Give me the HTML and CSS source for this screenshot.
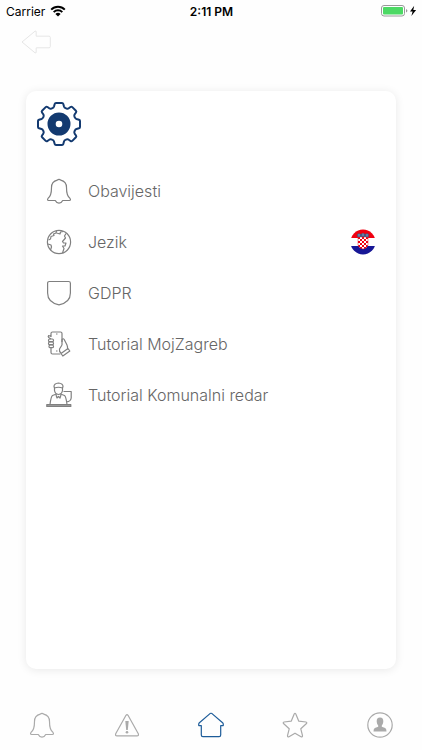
FILE: index.html
```html
<!DOCTYPE html>
<html lang="hr">
<head>
    <meta charset="UTF-8">
    <meta name="viewport" content="width=device-width, initial-scale=1.0">
    <title>Postavke - MojZagreb</title>
    <link rel="stylesheet" href="styles.css">
</head>
<body>
    <div class="status-bar">
        <div class="carrier">
            Carrier
            <svg width="16" height="12" viewBox="0 0 16 12">
                <path d="M1.2 4.6a9.6 9.6 0 0 1 13.6 0M3.7 7.1a6.1 6.1 0 0 1 8.6 0" fill="none" stroke="#000" stroke-width="2"/>
                <path d="M8 11.6L5.4 9a3.7 3.7 0 0 1 5.2 0z"/>
            </svg>
        </div>
        <div class="time">2:11 PM</div>
        <div class="battery">
            <svg width="37" height="12" viewBox="0 0 37 12">
                <rect x="1.5" y=".5" width="23" height="10.5" rx="2.5" fill="#fff" stroke="#999"/>
                <rect x="3" y="2" width="20" height="7.5" rx="1" fill="#4cd964"/>
                <path d="M26 4v3.5q1.4-.4 1.4-1.75T26 4z" fill="#999"/>
                <path d="M34.2.8L30 6.600h2.600l-1.200 4.400 4.700-5.900h-2.800z"/>
            </svg>
        </div>
    </div>

    <header class="header">
        <a href="#" class="back" aria-label="Natrag">
            <svg width="30" height="24" viewBox="0 0 30 24">
                <path d="M1 12L14 1.2q1.2-.7 1.2.8v4.2H28q1.3 0 1.3 1.3v9q0 1.3-1.3 1.3H15.2V22q0 1.5-1.2.8z"/>
            </svg>
        </a>
    </header>

    <main class="card">
        <svg class="gear" width="46" height="46" viewBox="-23 -23 46 46">
            <path d="M-3-21H3Q4-21 4.300-20L5-17.500Q5.400-16.300 6.500-15.900L7.700-15.400Q8.800-15 9.800-15.800L11.500-17Q12.500-17.700 13.300-16.900L16.900-13.300Q17.700-12.500 17-11.500L15.800-9.800Q15-8.800 15.400-7.700L15.900-6.500Q16.300-5.400 17.500-5L20-4.300Q21-4 21-3V3Q21 4 20 4.300L17.500 5Q16.300 5.400 15.900 6.500L15.400 7.700Q15 8.800 15.800 9.800L17 11.500Q17.700 12.500 16.900 13.300L13.300 16.900Q12.500 17.700 11.500 17L9.800 15.800Q8.800 15 7.700 15.400L6.500 15.900Q5.400 16.300 5 17.500L4.300 20Q4 21 3 21H-3Q-4 21-4.300 20L-5 17.500Q-5.400 16.300-6.500 15.900L-7.700 15.400Q-8.800 15-9.800 15.800L-11.500 17Q-12.500 17.700-13.300 16.900L-16.900 13.300Q-17.700 12.500-17 11.500L-15.800 9.800Q-15 8.800-15.400 7.700L-15.900 6.500Q-16.300 5.400-17.500 5L-20 4.300Q-21 4-21 3V-3Q-21-4-20-4.300L-17.500-5Q-16.300-5.400-15.900-6.500L-15.400-7.700Q-15-8.800-15.800-9.800L-17-11.500Q-17.700-12.500-16.900-13.300L-13.300-16.900Q-12.500-17.700-11.500-17L-9.800-15.800Q-8.800-15-7.700-15.400L-6.500-15.900Q-5.400-16.300-5-17.500L-4.300-20Q-4-21-3-21z" fill="none" stroke="#133a70" stroke-width="2" stroke-linejoin="round"/>
            <circle r="7.4" fill="none" stroke="#133a70" stroke-width="8.200"/>
        </svg>

        <ul class="menu">
            <li>
                <a href="#">
                    <svg class="icon" viewBox="0 0 26 26">
                        <path d="M11.300 2.200q1.700-1.800 3.400 0c4 .9 5.800 3.600 5.800 7.400 0 6 .8 9 3.400 10.600q1.400 2.300-.6 2.300h-6.600q-1.200 2.600-3.700 2.600t-3.700-2.600H2.700q-2 0-.6-2.300C4.700 18.600 5.500 15.600 5.500 9.600c0-3.800 1.800-6.500 5.800-7.400z"/>
                    </svg>
                    <span>Obavijesti</span>
                </a>
            </li>
            <li>
                <a href="#">
                    <svg class="icon" viewBox="0 0 26 26">
                        <circle cx="13" cy="13" r="11.600"/>
                        <path d="M10.500 2l-.5 2-2.500 1 .5 1.500-3 1-.5 2.500-2 1M2 15l3 1 .5 2-1 3M10.500 4l3.500 1 .5-2 3-.5M20 4.500L18.500 7l1 2-3 3.500 1 1.500h2.500l-1 3h-2.500l1.500 2.500L16.500 24"/>
                    </svg>
                    <span>Jezik</span>
                    <svg class="flag" width="26" height="26" viewBox="0 0 26 26">
                        <defs>
                            <clipPath id="round"><circle cx="13" cy="13" r="12.500"/></clipPath>
                            <pattern id="checks" width="4" height="4" patternUnits="userSpaceOnUse" x="8" y="8">
                                <rect width="4" height="4" fill="#fff"/>
                                <path d="M0 0h2v2H0zM2 2h2v2H2z" fill="#f00010"/>
                            </pattern>
                        </defs>
                        <g clip-path="url(#round)">
                            <rect width="26" height="26" fill="#fff"/>
                            <rect width="26" height="9" fill="#f00010"/>
                            <rect y="17" width="26" height="9" fill="#171796"/>
                        </g>
                        <path d="M8 8h10v8q-1 3.500-5 4-4-.5-5-4z" fill="url(#checks)" stroke="#e23" stroke-width=".5"/>
                        <path d="M7.500 8.300L7 5.200l2-1 1.600.7L13 3.900l2.400 1 1.600-.7 2 1-.5 3.100q-5.500-1.300-11 0z" fill="#4a5a80"/>
                        <path d="M9 5v2.500M13 4.500V7M17 5v2.500" stroke="#8fb0dc" stroke-width=".8"/>
                    </svg>
                </a>
            </li>
            <li>
                <a href="#">
                    <svg class="icon" viewBox="0 0 26 26">
                        <path d="M3.400 1.500h19.200q1.800 0 1.800 1.800V13c0 7-5 10.500-11.400 11.800C6.600 23.500 1.600 20 1.600 13V3.300q0-1.800 1.800-1.800z"/>
                    </svg>
                    <span>GDPR</span>
                </a>
            </li>
            <li>
                <a href="#">
                    <svg class="icon" viewBox="0 0 26 26">
                        <path d="M5 6V2.500q0-1.500 1.500-1.500h8q1.500 0 1.500 1.500V11M5 17v4.500Q5 23 6.500 23h8M10 3h1.500M10 20h1.500M5 5.500l-2.300-1q-1 1 0 2L5 8"/>
                        <rect x="2.500" y="8" width="5" height="2.700" rx="1.300"/>
                        <rect x="2.500" y="11" width="5" height="2.700" rx="1.300"/>
                        <rect x="3" y="14" width="4.500" height="2.700" rx="1.300"/>
                        <path d="M16 14V8.500q1.200-1.500 2.200 0l2.800 5.500q1 2.500.5 4.500M16 14l-2.500 4q-.5 2.500 1.500 4l1 .500M15 22.500l7-5 1.800 2.500-7 5z"/>
                    </svg>
                    <span>Tutorial MojZagreb</span>
                </a>
            </li>
            <li>
                <a href="#">
                    <svg class="icon" viewBox="0 0 26 26">
                        <path d="M8 4.500q0-3 4.500-3.500Q17 1.500 17 4.500l-.5 1.500q-4-1.500-8 0zM8.500 6v2.500q.5 3.500 4 4 3.500-.5 4-4V6M10.500 12l-4 1.500Q5 14.500 4 22.500M14.500 12l4 1.500q1.500 1 2.500 9M10 13l1 3 1.500-1.500L14 16l1-3M17.500 9.500h7.700V16q-.4 3.500-4.700 4"/>
                        <rect x=".8" y="22.500" width="24" height="2" fill="#999"/>
                    </svg>
                    <span>Tutorial Komunalni redar</span>
                </a>
            </li>
        </ul>
    </main>

    <nav class="tab-bar">
        <a href="#" aria-label="Obavijesti">
            <svg class="icon" viewBox="0 0 26 26">
                <path d="M11.300 2.200q1.700-1.800 3.400 0c4 .9 5.800 3.600 5.800 7.400 0 6 .8 9 3.400 10.600q1.400 2.300-.6 2.300h-6.600q-1.200 2.600-3.700 2.600t-3.700-2.600H2.700q-2 0-.6-2.300C4.700 18.600 5.500 15.600 5.500 9.600c0-3.800 1.800-6.500 5.800-7.400z"/>
            </svg>
        </a>
        <a href="#" aria-label="Upozorenja">
            <svg class="icon" viewBox="0 0 26 26">
                <path d="M12 3.300q1-1.500 2 0l10.300 18.500q.7 2-1.300 2H3q-2 0-1.300-2z"/>
                <path class="solid" d="M11.300 9h3.400l-.9 9h-1.600z"/>
                <circle class="solid" cx="13" cy="20.300" r="1.300"/>
            </svg>
        </a>
        <a href="#" class="active" aria-label="Početna">
            <svg class="icon" viewBox="0 0 26 26">
                <path d="M12 1.600q1-.7 2 0l10.600 9.100q1 1.200.6 3h-2.500V23q0 1.600-1.600 1.600H4.900q-1.600 0-1.600-1.600v-9.300H.8q-.4-1.800.6-3z"/>
            </svg>
        </a>
        <a href="#" aria-label="Favoriti">
            <svg class="icon" viewBox="0 0 26 26">
                <path d="M12.200 2q.8-1.500 1.600 0l3 7.200 7.200.8q1.300.4.500 1.500l-5.700 5.300 1.700 6.900q0 1.600-1.500 1l-6-3.500-6 3.500q-1.500.6-1.500-1l1.700-6.900-5.700-5.300Q.7 10.400 2 10l7.200-.8z"/>
            </svg>
        </a>
        <a href="#" aria-label="Profil">
            <svg class="icon" viewBox="0 0 26 26">
                <circle cx="13" cy="13" r="12.200"/>
                <path class="solid" d="M13 5.500c2.400 0 3.400 1.600 3.300 4-.1 2-.8 3.200-1.500 4v1.300l3.400 1.200q1.300.8 1.300 3.500h-13q0-2.700 1.300-3.500l3.400-1.200v-1.300c-.7-.8-1.400-2-1.500-4-.1-2.400.9-4 3.300-4z"/>
            </svg>
        </a>
    </nav>
</body>
</html>
```
FILE: styles.css
```css
* {
    margin: 0;
    padding: 0;
    box-sizing: border-box;
}

body {
    min-height: 100vh;
    display: flex;
    flex-direction: column;
    font-family: Inter, 'Liberation Sans', sans-serif;
    background-color: #fefefe;
    color: #808080;
}

a {
    color: inherit;
    text-decoration: none;
}

.status-bar {
    height: 22px;
    padding: 0 5px 0 6px;
    display: grid;
    grid-template-columns: 1fr auto 1fr;
    align-items: center;
    font-size: 12px;
    color: #000;
}

.carrier {
    display: flex;
    align-items: center;
    gap: 5px;
}

.time {
    font-weight: 600;
}

.battery {
    display: flex;
    justify-content: flex-end;
}

.header {
    height: 69px;
    padding: 8px 21px;
}

.back {
    display: inline-block;
}

.back svg {
    display: block;
    fill: none;
    stroke: #e6e6e6;
}

.card {
    flex: 1;
    margin: 0 26px;
    padding: 10px;
    background-color: #fff;
    border-radius: 10px;
    box-shadow: 0 1px 10px rgba(0, 0, 0, 0.09);
}

.gear {
    display: block;
}

.icon {
    width: 26px;
    height: 26px;
    fill: none;
    stroke: currentColor;
    stroke-width: 1.2;
    stroke-linejoin: round;
}

.icon .solid {
    fill: currentColor;
    stroke: none;
}

.menu {
    margin-top: 18px;
    padding: 0 10px;
    list-style: none;
}

.menu a {
    height: 51px;
    display: flex;
    align-items: center;
    gap: 16px;
    font-size: 16px;
}

.menu span {
    font-weight: 300;
    color: #666;
}

.flag {
    margin-left: auto;
}

.tab-bar {
    height: 81px;
    padding-top: 31px;
    display: flex;
    align-items: center;
    color: #aaa;
}

.tab-bar a {
    flex: 1;
    display: flex;
    justify-content: center;
}

.tab-bar .active {
    color: #1d5c99;
}
```
